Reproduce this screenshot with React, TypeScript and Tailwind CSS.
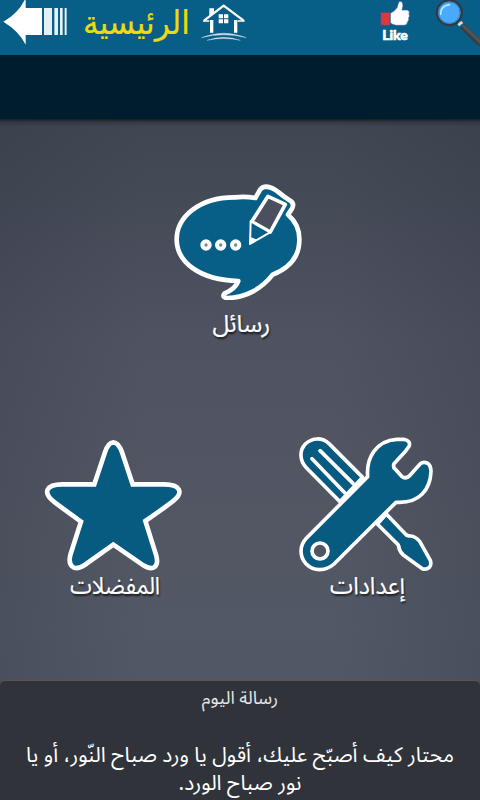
import type { ReactNode } from "react";

const arabic = "font-['Noto_Sans_Arabic','Noto_Naskh_Arabic','Noto_Sans','DejaVu_Sans',sans-serif]";

function BackIcon() {
  return (
    <svg className="block h-[46px] w-[66px] shrink-0" viewBox="9 0 198 138" fill="#fff">
      <path d="M77 -6V24H126V105H77V134Q58 94 10 65Q56 40 77 -6Z" />
      <path d="M132 24H156V105H132ZM163 24H174V105H163ZM180 24H188V105H180ZM194 24H200V105H194Z" opacity=".9" />
    </svg>
  );
}

function HouseIcon() {
  return (
    <svg className="block h-[40px] w-[46px] shrink-0" viewBox="602 6 138 120" fill="none" stroke="#fff">
      <path d="M611 62L670 17L730 62" strokeWidth="7" />
      <path d="M608 63H627M712 63H733" strokeWidth="5" />
      <path d="M634 60V98M706 60V98" strokeWidth="10" />
      <path d="M627 25H641V39L627 50Z" fill="#fff" stroke="none" />
      <path d="M655 43H668V55H655ZM671 43H684V55H671ZM655 58H668V70H655ZM671 58H684V70H671Z" fill="#fff" stroke="none" />
      <path d="M603 113Q670 86 738 113Q670 96 603 113ZM620 121Q670 103 720 121Q670 110 620 121Z" fill="#cfe0ea" stroke="#cfe0ea" strokeWidth="1" />
    </svg>
  );
}

function ThumbIcon() {
  return (
    <svg className="block h-[26px] w-[34px]" viewBox="54 0 102 78">
      <path d="M62 37H90V76H62Z" fill="#d93b3b" stroke="#31519b" strokeWidth="2" />
      <path
        d="M91 40Q103 34 111 23L116 6Q123 0 128 9Q131 18 126 30H142Q151 33 147 42Q151 48 146 54Q149 61 143 65Q143 74 133 76H108Q99 75 91 69Z"
        fill="#fff"
        stroke="#35579e"
        strokeWidth="2"
      />
    </svg>
  );
}

function SearchIcon() {
  return (
    <svg className="block h-[48px] w-[46px] shrink-0" viewBox="222 0 138 144">
      <path d="M307 78L354 126Q358 129 364 127" fill="none" stroke="#3a3d40" strokeWidth="18" />
      <path d="M308 76L364 129" stroke="#505355" strokeWidth="10" />
      <path d="M291 60L303 73" stroke="#777" strokeWidth="12" />
      <path d="M295 76L307 66" stroke="#dedede" strokeWidth="8" />
      <circle cx="268" cy="38" r="37" fill="#49a9fa" stroke="#343a40" strokeWidth="7" />
      <circle cx="268" cy="38" r="32" fill="none" stroke="#2383d9" strokeWidth="3" />
      <path d="M242 43Q241 18 268 14" fill="none" stroke="#c4e7ff" strokeWidth="5" strokeLinecap="round" />
    </svg>
  );
}

function MessagesIcon() {
  return (
    <svg className="block h-[116px] w-[128px]" viewBox="42 42 384 348" strokeLinejoin="round">
      <path
        d="M286 84Q257 79 225 82C119 81 49 141 50 210C51 275 117 330 235 333Q227 356 194 370Q184 382 201 384C258 384 307 354 338 314C393 292 419 255 418 207C418 177 405 152 384 134L396 116Q404 100 391 92Q373 81 356 67Q337 51 318 50Q303 51 297 65Z"
        fill="#075f87"
        stroke="#fff"
        strokeWidth="14"
      />
      <path d="M324 79L376 103L331 186L275 155Z" fill="#4b505f" stroke="#fff" strokeWidth="11" />
      <path d="M272 154L330 187L270 222Z" fill="#075f87" stroke="#fff" strokeWidth="6" />
      <path d="M271 201L292 209L270 223Z" fill="#fff" />
      <g fill="#6b8ba3" stroke="#fff" strokeWidth="12">
        <circle cx="138" cy="225" r="11" />
        <circle cx="182" cy="225" r="11" />
        <circle cx="227" cy="225" r="11" />
      </g>
    </svg>
  );
}

function StarIcon() {
  return (
    <svg className="block h-[132px] w-[138px]" viewBox="42 42 414 396">
      <path
        d="M193 178L225 82Q234 53 250 52Q266 53 276 82L308 178H403C451 178 460 202 433 225Q421 236 346 288L377 386C390 425 370 440 340 421L250 359L164 420C132 441 113 423 121 390L153 290L75 233C33 201 52 178 96 178Z"
        fill="#075a80"
        stroke="#fff"
        strokeWidth="14"
      />
    </svg>
  );
}

function ToolsIcon() {
  return (
    <svg className="block h-[136px] w-[136px]" viewBox="39 33 408 408" fill="#075a80" stroke="#fff" strokeWidth="11" strokeLinejoin="round" strokeLinecap="round">
      <path d="M165 230L64 128C43 106 43 76 61 57C82 37 112 37 132 56L233 157Z" />
      <path d="M81 101L179 203M105 77L204 175" />
      <path d="M304 267L361 327Q366 333 377 333Q391 334 404 349L436 406Q440 420 433 427Q424 435 412 431L354 389Q342 377 341 363Q338 356 331 351L277 297Z" />
      <path d="M248 155C243 98 274 47 335 43H356Q379 48 372 64L362 78L327 116Q323 127 331 133L350 154Q361 163 373 153L406 116Q415 109 426 114Q437 119 438 139C436 196 401 232 344 232H333L147 417C121 440 85 439 63 416C43 394 43 362 64 340Z" />
      <circle cx="105" cy="378" r="24" fill="#505564" />
    </svg>
  );
}

function Label({ children, className = "" }: { children: ReactNode; className?: string }) {
  return (
    <span dir="rtl" className={`block whitespace-nowrap text-center text-[24px] leading-[32px] text-white [text-shadow:1px_2px_2px_#000a] [-webkit-text-stroke:0.2px_#fff] ${className}`}>
      {children}
    </span>
  );
}

export default function App() {
  return (
    <div className={`flex h-[800px] w-[480px] flex-col overflow-hidden bg-[#4b505e] ${arabic}`}>
      <header className="flex h-[55px] shrink-0 items-start bg-[#075f87] pl-[3px]">
        <BackIcon />
        <div className="flex h-[43px] w-[132px] items-center justify-center pl-[3px] text-[#eddc0b]">
          <span dir="rtl" className="scale-y-[1.08] whitespace-nowrap font-['DejaVu_Sans',sans-serif] text-[31px] leading-[40px] [-webkit-text-stroke:0.2px_#eddc0b]">الرئيسية</span>
        </div>
        <div className="pt-[2px]"><HouseIcon /></div>
        <div className="ml-[131px] flex w-[34px] flex-col items-center">
          <ThumbIcon />
          <span className="font-['Lato',sans-serif] text-[14px] font-black leading-[17px] text-white [-webkit-text-stroke:0.6px_#fff]">Like</span>
        </div>
        <div className="ml-[22px]"><SearchIcon /></div>
      </header>
      <div className="h-[64px] shrink-0 bg-[#001d2f]" />
      <main className="flex min-h-0 flex-1 flex-col bg-[linear-gradient(90deg,#2a2f3d33_0%,#2a2f3d00_30%,#2a2f3d00_70%,#2a2f3d33_100%),linear-gradient(180deg,#16191f_0px,#343843_3px,#414653_8px,#454a57_80px,#4f5361_220px,#535764_410px,#515865_100%)] pt-[65px]">
        <div className="flex h-[252px] flex-col items-center pr-[4px]">
          <MessagesIcon />
          <Label className="mt-[9px] pl-[7px]">رسائل</Label>
        </div>
        <div className="flex justify-between pl-[44px] pr-[46px]">
          <div className="flex w-[138px] flex-col items-center pt-[3px]">
            <StarIcon />
            <Label className="scale-x-[0.91] pl-[4px]">المفضلات</Label>
          </div>
          <div className="flex w-[136px] flex-col items-center">
            <ToolsIcon />
            <Label className="-mt-px scale-x-[0.97] pl-[4px]">إعدادات</Label>
          </div>
        </div>
      </main>
      <footer dir="rtl" className="h-[120px] shrink-0 rounded-t-[5px] border-t border-[#5c5550] bg-[#30333a] text-center text-white">
        <p className="pt-[3px] text-[18px] leading-[28px] text-[#e6e6e6]">رسالة اليوم</p>
        <p className="mt-[29px] whitespace-nowrap text-[21px] leading-[28px]">
          محتار كيف أصبّح عليك، أقول يا ورد صباح النّور، أو يا<br />نور صباح الورد.
        </p>
      </footer>
    </div>
  );
}
